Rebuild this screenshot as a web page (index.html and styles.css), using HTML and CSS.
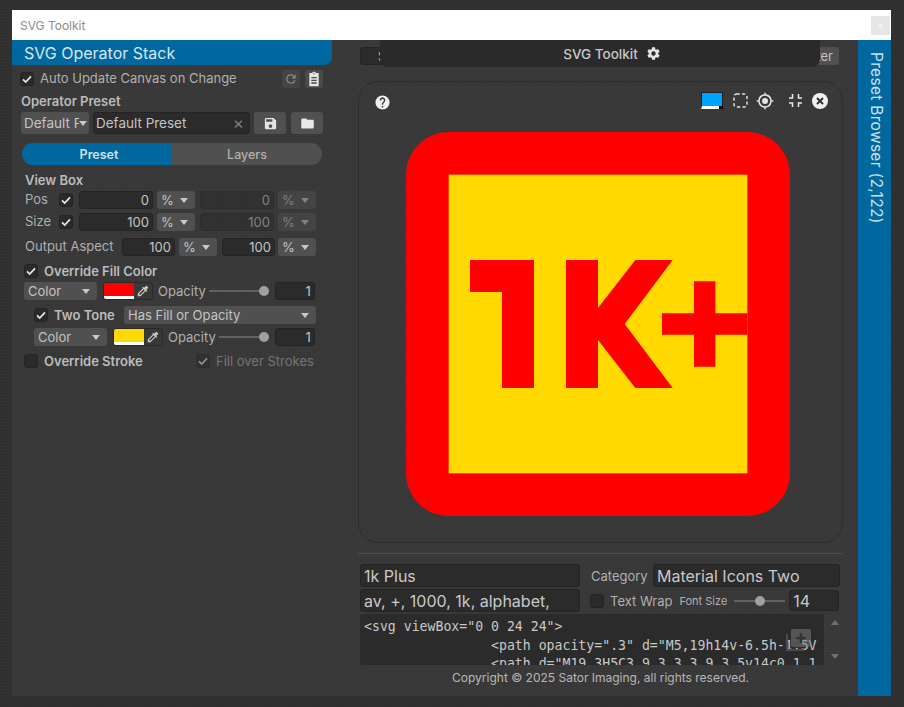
FILE: index.html
```html
<!DOCTYPE html>
<html lang="en">
<head>
    <meta charset="UTF-8">
    <meta name="viewport" content="width=device-width, initial-scale=1.0">
    <title>SVG Toolkit</title>
    <link rel="stylesheet" href="styles.css">
</head>
<body>
    <svg class="defs" width="0" height="0">
        <symbol id="tick" viewBox="0 0 14 14"><path d="M3 7.4l2.7 2.6L11 4.4" fill="none" stroke="currentColor" stroke-width="1.7"/></symbol>
        <symbol id="dropper" viewBox="0 0 24 24"><path fill="currentColor" d="M20.71 5.63l-2.34-2.34a1 1 0 0 0-1.41 0l-3.12 3.12-1.93-1.91-1.41 1.41 1.42 1.42L3 16.25V21h4.75l8.92-8.92 1.42 1.42 1.41-1.41-1.92-1.92 3.12-3.12a1 1 0 0 0 .01-1.42zM6.92 19 5 17.08l8.06-8.06 1.92 1.92L6.92 19z"/></symbol>
    </svg>

    <div class="window">
        <header class="titlebar">
            <span class="title">SVG Toolkit</span>
            <span class="title-close">×</span>
        </header>

        <div class="layout">
            <aside class="stack">
                <div class="stack-head">SVG Operator Stack</div>

                <div class="row auto-row">
                    <span class="check"><svg><use href="#tick"/></svg></span>
                    <span class="label">Auto Update Canvas on Change</span>
                    <span class="tool-btns">
                        <span class="tool-btn dim">
                            <svg viewBox="0 0 24 24" width="14" height="14"><path fill="#8a8a8a" d="M17.65 6.35A7.96 7.96 0 0 0 12 4a8 8 0 1 0 7.73 10h-2.08A6 6 0 1 1 12 6c1.66 0 3.14.69 4.22 1.78L13 11h7V4l-2.35 2.35z"/></svg>
                        </span>
                        <span class="tool-btn">
                            <svg viewBox="0 0 24 24" width="16" height="16"><path fill="#e4e4e4" d="M19 3h-4.2C14.4 1.8 13.3 1 12 1s-2.4.8-2.8 2H5v20h14V3zm-7 0a1 1 0 1 1 0 2 1 1 0 0 1 0-2zM8 9h8v2H8V9zm0 4h8v2H8v-2zm0 4h8v2H8v-2z"/></svg>
                        </span>
                    </span>
                </div>

                <div class="section-label preset-label">Operator Preset</div>
                <div class="row preset-row">
                    <span class="select preset-select"><span class="clip">Default P</span></span>
                    <span class="field preset-name">Default Preset<span class="clear">×</span></span>
                    <span class="btn">
                        <svg viewBox="0 0 24 24" width="15" height="15"><path fill="#e4e4e4" d="M17 3H5a2 2 0 0 0-2 2v14a2 2 0 0 0 2 2h14a2 2 0 0 0 2-2V7l-4-4zm-5 16a3 3 0 1 1 0-6 3 3 0 0 1 0 6zm3-10H5V5h10v4z"/></svg>
                    </span>
                    <span class="btn">
                        <svg viewBox="0 0 24 24" width="15" height="15"><path fill="#e8e8e8" d="M10 4H4a2 2 0 0 0-2 2v12a2 2 0 0 0 2 2h16a2 2 0 0 0 2-2V8a2 2 0 0 0-2-2h-8l-2-2z"/></svg>
                    </span>
                </div>

                <div class="tabs">
                    <span class="tab active">Preset</span>
                    <span class="tab">Layers</span>
                </div>

                <div class="section-label viewbox-label">View Box</div>
                <div class="row box-row">
                    <span class="label box-name">Pos</span>
                    <span class="check"><svg><use href="#tick"/></svg></span>
                    <span class="field num w74">0</span>
                    <span class="select w38">%</span>
                    <span class="field num w74 off">0</span>
                    <span class="select w38 off">%</span>
                </div>
                <div class="row box-row">
                    <span class="label box-name">Size</span>
                    <span class="check"><svg><use href="#tick"/></svg></span>
                    <span class="field num w74">100</span>
                    <span class="select w38">%</span>
                    <span class="field num w74 off">100</span>
                    <span class="select w38 off">%</span>
                </div>
                <div class="row aspect-row">
                    <span class="label aspect-name">Output Aspect</span>
                    <span class="field num w53">100</span>
                    <span class="select w38">%</span>
                    <span class="field num w53 second">100</span>
                    <span class="select w38 last">%</span>
                </div>

                <div class="row fill-head">
                    <span class="check"><svg><use href="#tick"/></svg></span>
                    <span class="section-label">Override Fill Color</span>
                </div>
                <div class="row paint-row">
                    <span class="select w73">Color</span>
                    <span class="swatch">
                        <span class="swatch-color red"></span>
                        <span class="swatch-pick"><svg><use href="#dropper"/></svg></span>
                    </span>
                    <span class="label opacity">Opacity</span>
                    <span class="slider"><span class="thumb"></span></span>
                    <span class="field num w40">1</span>
                </div>
                <div class="row tone-head">
                    <span class="check"><svg><use href="#tick"/></svg></span>
                    <span class="section-label tone-name">Two Tone</span>
                    <span class="select tone-select">Has Fill or Opacity</span>
                </div>
                <div class="row paint-row indented">
                    <span class="select w73">Color</span>
                    <span class="swatch">
                        <span class="swatch-color yellow"></span>
                        <span class="swatch-pick"><svg><use href="#dropper"/></svg></span>
                    </span>
                    <span class="label opacity">Opacity</span>
                    <span class="slider"><span class="thumb"></span></span>
                    <span class="field num w40">1</span>
                </div>
                <div class="row stroke-row">
                    <span class="check"></span>
                    <span class="section-label">Override Stroke</span>
                    <span class="check off fill-over"><svg><use href="#tick"/></svg></span>
                    <span class="label off">Fill over Strokes</span>
                </div>
            </aside>

            <main class="center">
                <div class="app-tab">
                    <span>SVG Toolkit</span>
                    <svg viewBox="0 0 24 24" width="15" height="15"><path fill="#e6e6e6" d="M19.43 12.98c.04-.32.07-.64.07-.98s-.03-.66-.07-.98l2.11-1.65a.5.5 0 0 0 .12-.64l-2-3.46a.5.5 0 0 0-.61-.22l-2.49 1a7.3 7.3 0 0 0-1.69-.98l-.38-2.65A.49.49 0 0 0 14 2h-4a.49.49 0 0 0-.49.42l-.38 2.65c-.61.25-1.17.59-1.69.98l-2.49-1a.5.5 0 0 0-.61.22l-2 3.46a.49.49 0 0 0 .12.64l2.11 1.65c-.04.32-.07.65-.07.98s.03.66.07.98l-2.11 1.65a.5.5 0 0 0-.12.64l2 3.46c.12.22.39.3.61.22l2.49-1c.52.4 1.08.73 1.69.98l.38 2.65c.03.24.24.42.49.42h4c.25 0 .46-.18.49-.42l.38-2.65a7.7 7.7 0 0 0 1.69-.98l2.49 1c.23.09.49 0 .61-.22l2-3.46a.5.5 0 0 0-.12-.64l-2.11-1.65zM12 15.5a3.5 3.5 0 1 1 0-7 3.5 3.5 0 0 1 0 7z"/></svg>
                </div>

                <div class="top-row">
                    <span class="field search">Search</span>
                    <span class="btn filter">Filter</span>
                </div>

                <section class="preview">
                    <div class="preview-tools">
                        <svg class="help" viewBox="0 0 24 24" width="17" height="17"><path fill="#f0f0f0" d="M12 2a10 10 0 1 0 0 20 10 10 0 0 0 0-20zm1 17h-2v-2h2v2zm2.07-7.75-.9.92C13.45 12.9 13 13.5 13 15h-2v-.5c0-1.1.45-2.1 1.17-2.83l1.24-1.26A2 2 0 1 0 10 9H8a4 4 0 1 1 7.07 2.25z"/></svg>
                        <span class="bg-swatch"><span class="bg-alpha"></span></span>
                        <svg class="tool-dashed" viewBox="0 0 15 15" width="15" height="15"><rect x="1" y="1" width="13" height="13" rx="2.5" fill="none" stroke="#e8e8e8" stroke-width="1.4" stroke-dasharray="3.2 2.4"/></svg>
                        <svg class="tool-target" viewBox="0 0 24 24" width="18" height="18"><path fill="#e4e4e4" d="M12 8a4 4 0 1 0 0 8 4 4 0 0 0 0-8zm8.94 3A8.99 8.99 0 0 0 13 3.06V1h-2v2.06A8.99 8.99 0 0 0 3.06 11H1v2h2.06A8.99 8.99 0 0 0 11 20.94V23h2v-2.06A8.99 8.99 0 0 0 20.94 13H23v-2h-2.06zM12 19a7 7 0 1 1 0-14 7 7 0 0 1 0 14z"/></svg>
                        <svg class="tool-exit" viewBox="0 0 15 15" width="15" height="15"><path fill="none" stroke="#e8e8e8" stroke-width="1.5" d="M1 5h3.5V1M10.5 1v4H14M14 10h-3.5v4M4.5 14v-4H1"/></svg>
                        <svg class="tool-close" viewBox="0 0 16 16" width="16" height="16"><circle cx="8" cy="8" r="8" fill="#f0f0f0"/><path d="M5 5l6 6M11 5l-6 6" stroke="#333" stroke-width="2"/></svg>
                    </div>
                    <svg class="art" viewBox="3 3 18 18" width="384" height="384">
                        <path fill="#ff0000" d="M5 3h14a2 2 0 0 1 2 2v14a2 2 0 0 1-2 2H5a2 2 0 0 1-2-2V5a2 2 0 0 1 2-2z"/>
                        <rect x="5" y="5" width="14" height="14" fill="#ffd900"/>
                        <path fill="#ff0000" d="M6 9h3v6H7.5v-4.5H6zM10.5 9H12v2.25L13.75 9h1.75l-2.25 3 2.25 3h-1.75L12 12.75V15h-1.5zM15 11.5h1.5V10h1v1.5H19v1h-1.5V14h-1v-1.5H15z"/>
                    </svg>
                </section>

                <hr class="divider">

                <div class="meta-row">
                    <span class="field text-field name-field">1k Plus</span>
                    <span class="label category">Category</span>
                    <span class="field text-field category-field">Material Icons Two</span>
                </div>
                <div class="meta-row second-row">
                    <span class="field text-field name-field">av, +, 1000, 1k, alphabet,</span>
                    <span class="check wrap-check"></span>
                    <span class="label wrap-label">Text Wrap</span>
                    <span class="label font-size">Font Size</span>
                    <span class="slider size-slider"><span class="thumb"></span></span>
                    <span class="field text-field size-field">14</span>
                </div>

                <div class="code-row">
                    <div class="code">
                        <pre>&lt;svg viewBox="0 0 24 24"&gt;
                &lt;path opacity=".3" d="M5,19h14v-6.5h-1.5V
                &lt;path d="M19,3H5C3.9,3,3,3.9,3,5v14c0,1.1</pre>
                        <span class="copy-btn">+</span>
                    </div>
                    <div class="scroll-arrows">
                        <span class="arrow-up"></span>
                        <span class="arrow-down"></span>
                    </div>
                </div>

                <footer class="copyright">Copyright © 2025 Sator Imaging, all rights reserved.</footer>
            </main>

            <aside class="browser-tab"><span>Preset Browser (2,122)</span></aside>
        </div>
    </div>
</body>
</html>
```

FILE: styles.css
```css
/* page and window */
html, body {
    height: 100%;
}

body {
    margin: 0;
    overflow: hidden;
    background-color: #323232;
    background-image: radial-gradient(circle at 1px 1px, #2e2e2e 0.8px, transparent 1px);
    background-size: 3px 3px;
    font-family: Inter, "Liberation Sans", sans-serif;
    font-size: 13px;
    color: #b0b0b0;
}

.defs {
    position: absolute;
}

.window {
    margin: 10px 13px 0 12px;
    height: 686px;
    display: flex;
    flex-direction: column;
    background-color: #3a3a3a;
    background-image: radial-gradient(circle at 1px 1px, #373737 0.8px, transparent 1px);
    background-size: 3px 3px;
}

.titlebar {
    height: 30px;
    flex: none;
    display: flex;
    align-items: center;
    justify-content: space-between;
    padding-left: 8px;
    padding-right: 1px;
    background: #ffffff;
}

.title {
    font-size: 12px;
    color: #8c8c8c;
}

.title-close {
    width: 19px;
    height: 19px;
    display: flex;
    align-items: center;
    justify-content: center;
    background: #e6e6e6;
    color: #f4f4f4;
    font-size: 13px;
}

.layout {
    flex: 1;
    display: flex;
    min-height: 0;
}

/* shared controls */
.row {
    display: flex;
    align-items: center;
    height: 18px;
}

.label {
    font-size: 13px;
    white-space: nowrap;
}

.section-label {
    font-size: 13px;
    font-weight: 600;
    color: #bcbcbc;
    white-space: nowrap;
}

.check {
    width: 14px;
    height: 14px;
    flex: none;
    border-radius: 3px;
    background: #2a2a2a;
    border: 1px solid #242424;
    box-sizing: border-box;
    color: #e8e8e8;
    display: flex;
    align-items: center;
    justify-content: center;
}

.check svg {
    width: 14px;
    height: 14px;
    flex: none;
}

.field {
    height: 18px;
    box-sizing: border-box;
    flex: none;
    display: flex;
    align-items: center;
    background: #2b2b2b;
    border: 1px solid #242424;
    border-radius: 3px;
    color: #c4c4c4;
    white-space: nowrap;
    overflow: hidden;
}

.num {
    justify-content: flex-end;
    padding-right: 3px;
    font-size: 13px;
}

.select {
    position: relative;
    height: 18px;
    box-sizing: border-box;
    flex: none;
    display: flex;
    align-items: center;
    padding-left: 4px;
    background: #505050;
    border-radius: 3px;
    color: #c4c4c4;
    font-size: 13px;
    white-space: nowrap;
}

.select::after {
    content: "";
    position: absolute;
    right: 7px;
    top: 7px;
    border-left: 4px solid transparent;
    border-right: 4px solid transparent;
    border-top: 5px solid #c8c8c8;
}

.off {
    opacity: 0.5;
}

.btn {
    height: 22px;
    width: 32px;
    flex: none;
    display: flex;
    align-items: center;
    justify-content: center;
    background: #505050;
    border-radius: 3px;
}

.w74 { width: 74px; }
.w53 { width: 53px; }
.w40 { width: 40px; }
.w38 { width: 38px; }
.w73 { width: 73px; }

.slider {
    position: relative;
    height: 2px;
    flex: none;
    background: #626262;
}

.thumb {
    position: absolute;
    right: 0;
    top: -4px;
    width: 10px;
    height: 10px;
    border-radius: 50%;
    background: #a0a0a0;
}

/* left panel */
.stack {
    width: 320px;
    flex: none;
}

.stack-head {
    height: 25px;
    box-sizing: border-box;
    padding-left: 12px;
    background: #00689f;
    border-bottom-right-radius: 8px;
    color: #d6e6ee;
    font-size: 16px;
    line-height: 26px;
}

.auto-row {
    margin-top: 5px;
    padding: 0 9px 0 8px;
}

.auto-row .label {
    margin-left: 6px;
    margin-bottom: 2px;
}

.tool-btns {
    margin-left: auto;
    display: flex;
    gap: 5px;
}

.tool-btn {
    width: 18px;
    height: 18px;
    display: flex;
    align-items: center;
    justify-content: center;
    background: #4a4a4a;
    border-radius: 3px;
}

.tool-btn.dim {
    background: #444444;
}

.preset-label {
    margin-top: 5px;
    padding-left: 9px;
    line-height: 16px;
}

.preset-row {
    margin-top: 3px;
    height: 22px;
    padding-left: 9px;
}

.preset-select {
    width: 68px;
    height: 22px;
    padding-left: 3px;
    font-size: 13.5px;
}

.preset-select::after {
    top: 9px;
    right: 2px;
}

.clip {
    width: 55px;
    overflow: hidden;
}

.preset-name {
    position: relative;
    width: 157px;
    height: 22px;
    margin: 0 4px;
    padding-left: 2px;
    font-size: 13.5px;
}

.clear {
    position: absolute;
    right: 5px;
    top: 0;
    line-height: 20px;
    font-size: 17px;
    color: #808080;
}

.preset-row .btn + .btn {
    margin-left: 5px;
}

.tabs {
    display: flex;
    width: 300px;
    height: 22px;
    margin: 9px 0 0 10px;
    border-radius: 11px;
    overflow: hidden;
    background: #505050;
}

.tab {
    flex: 0 0 150px;
    box-sizing: border-box;
    text-align: center;
    line-height: 23px;
    font-size: 12.5px;
    font-weight: 500;
}

.tab.active {
    padding-left: 4px;
    background: #00689f;
    color: #cfe0ea;
    font-weight: 600;
}

.viewbox-label {
    margin-top: 7px;
    padding-left: 13px;
    line-height: 16px;
}

.box-row {
    margin-top: 4px;
    padding-left: 13px;
}

.viewbox-label + .box-row {
    margin-top: 3px;
}

.box-name {
    width: 34px;
    margin-bottom: 2px;
}

.box-row .w74 {
    margin-left: 6px;
}

.box-row .select {
    margin-left: 4px;
}

.box-row .field + .select + .field {
    margin-left: 5px;
}

.aspect-row {
    margin-top: 6px;
    padding-left: 13px;
    height: 19px;
}

.aspect-name {
    width: 97px;
    margin-bottom: 2px;
}

.aspect-row .select {
    margin-left: 4px;
}

.aspect-row .second {
    margin-left: 5px;
}

.aspect-row .last {
    margin-left: 3px;
}

.fill-head {
    margin-top: 6px;
    padding-left: 12px;
}

.fill-head .section-label {
    margin-left: 6px;
}

.paint-row {
    margin-top: 2px;
    padding-left: 12px;
}

.paint-row.indented {
    margin-top: 4px;
    padding-left: 22px;
}

.swatch {
    display: flex;
    width: 50px;
    height: 18px;
    margin-left: 6px;
    flex: none;
    box-sizing: border-box;
    border: 1px solid #2a2a2a;
    border-radius: 3px;
    overflow: hidden;
}

.swatch-color {
    width: 30px;
    box-sizing: border-box;
    border-bottom: 3px solid #ffffff;
}

.swatch-color.red {
    background: #ff0000;
}

.swatch-color.yellow {
    background: #ffd900;
}

.swatch-pick {
    flex: 1;
    display: flex;
    align-items: center;
    justify-content: center;
    color: #c8c8c8;
}

.swatch-pick svg {
    width: 14px;
    height: 14px;
}

.opacity {
    margin-left: 5px;
}

.paint-row .slider {
    margin-left: 3px;
    width: 60px;
}

.paint-row.indented .slider {
    width: 50px;
}

.paint-row .field {
    margin-left: 6px;
}

.tone-head {
    margin-top: 6px;
    padding-left: 22px;
}

.tone-name {
    width: 70px;
    margin-left: 6px;
}

.tone-select {
    width: 192px;
}

.stroke-row {
    margin-top: 6px;
    padding-left: 12px;
}

.stroke-row .section-label {
    width: 152px;
    margin-left: 6px;
}

.fill-over {
    margin-right: 6px;
}

/* centre column */
.center {
    position: relative;
    width: 485px;
    margin-left: 26px;
    margin-right: 15px;
    flex: none;
}

.app-tab {
    position: absolute;
    left: 22px;
    top: 0;
    width: 440px;
    height: 27px;
    box-sizing: border-box;
    padding-left: 24px;
    display: flex;
    align-items: center;
    justify-content: center;
    gap: 8px;
    background: #2a2a2a;
    border-radius: 0 0 8px 8px;
    font-size: 13.5px;
    font-weight: 500;
    color: #c8c8c8;
}

.top-row {
    height: 18px;
    padding: 7px 4px 0 2px;
    display: flex;
    justify-content: space-between;
}

.search {
    width: 100px;
    padding-left: 17px;
    font-size: 13px;
}

.filter {
    width: 90px;
    height: 18px;
    justify-content: flex-end;
    padding-right: 6px;
    box-sizing: border-box;
    font-size: 13px;
    color: #c4c4c4;
}

.preview {
    height: 462px;
    box-sizing: border-box;
    margin-top: 16px;
    border: 1px solid #2e2e2e;
    border-radius: 20px;
}

.preview-tools {
    display: flex;
    align-items: center;
    height: 17px;
    margin-top: 10px;
    padding-left: 15px;
}

.help {
    margin-top: 3px;
}

.bg-swatch {
    position: relative;
    width: 22px;
    height: 17px;
    margin-left: 310px;
    box-sizing: border-box;
    background: #00a2ff;
    border: 1px solid #222222;
    border-bottom: 3px solid #ffffff;
}

.bg-alpha {
    position: absolute;
    right: -1px;
    bottom: -3px;
    width: 4px;
    height: 3px;
    background: #000000;
}

.tool-dashed {
    margin-left: 10px;
}

.tool-target {
    margin-left: 8px;
}

.tool-exit {
    margin-left: 14px;
}

.tool-close {
    margin-left: 9px;
}

.art {
    display: block;
    margin: 23px 0 0 47px;
}

.divider {
    margin: 10px 0 0;
    height: 1px;
    border: 0;
    background: #4e4e4e;
}

.meta-row {
    display: flex;
    align-items: center;
    height: 23px;
    margin-top: 10px;
    padding-left: 2px;
}

.second-row {
    margin-top: 2px;
}

.text-field {
    height: 23px;
    padding-left: 3px;
    font-size: 16px;
    color: #c8c8c8;
}

.name-field {
    width: 220px;
}

.category {
    margin-left: 11px;
    width: 62px;
}

.category-field {
    width: 187px;
}

.wrap-check {
    margin-left: 10px;
}

.wrap-label {
    margin-left: 6px;
}

.font-size {
    margin-left: 7px;
    font-size: 11px;
}

.size-slider {
    width: 51px;
    margin-left: 7px;
}

.size-slider .thumb {
    right: 20px;
}

.size-field {
    width: 50px;
    height: 21px;
    margin-left: 4px;
}

.code-row {
    display: flex;
    margin-top: 2px;
    padding-left: 2px;
}

.code {
    position: relative;
    width: 464px;
    height: 51px;
    box-sizing: border-box;
    padding: 4px 0 0 4px;
    background: #2b2b2b;
    border-radius: 3px;
    overflow: hidden;
}

.code pre {
    margin: 0;
    font-family: "DejaVu Sans Mono", "Liberation Mono", monospace;
    font-size: 13.2px;
    line-height: 18.5px;
    color: #c8c8c8;
}

.copy-btn {
    position: absolute;
    left: 426px;
    top: 15px;
    width: 20px;
    height: 18px;
    margin-left: 5px;
    text-align: center;
    line-height: 17px;
    font-size: 19px;
    font-weight: 700;
    color: #333333;
    background: rgba(120, 120, 120, 0.55);
    border-radius: 2px;
}

.copy-btn::before {
    content: "";
    position: absolute;
    left: -5px;
    top: 5px;
    width: 18px;
    height: 17px;
    border-left: 2px solid #4c4c4c;
    border-bottom: 2px solid #4c4c4c;
    box-sizing: border-box;
}

.scroll-arrows {
    flex: 1;
    display: flex;
    flex-direction: column;
    justify-content: space-between;
    align-items: center;
    height: 51px;
    padding-left: 2px;
    box-sizing: border-box;
    padding-top: 6px;
    padding-bottom: 6px;
}

.arrow-up {
    border-left: 4px solid transparent;
    border-right: 4px solid transparent;
    border-bottom: 5px solid #707070;
}

.arrow-down {
    border-left: 4px solid transparent;
    border-right: 4px solid transparent;
    border-top: 5px solid #707070;
}

.copyright {
    margin-top: 6px;
    text-align: center;
    font-size: 12px;
    line-height: 14px;
    color: #b8b8b8;
}

/* right rail */
.browser-tab {
    width: 33px;
    flex: none;
    background: #00689f;
    color: #cfe0ea;
}

.browser-tab span {
    display: block;
    writing-mode: vertical-rl;
    margin-top: 12px;
    padding-right: 6px;
    font-size: 15.5px;
    line-height: 18px;
    letter-spacing: 0.3px;
    float: right;
}
```
